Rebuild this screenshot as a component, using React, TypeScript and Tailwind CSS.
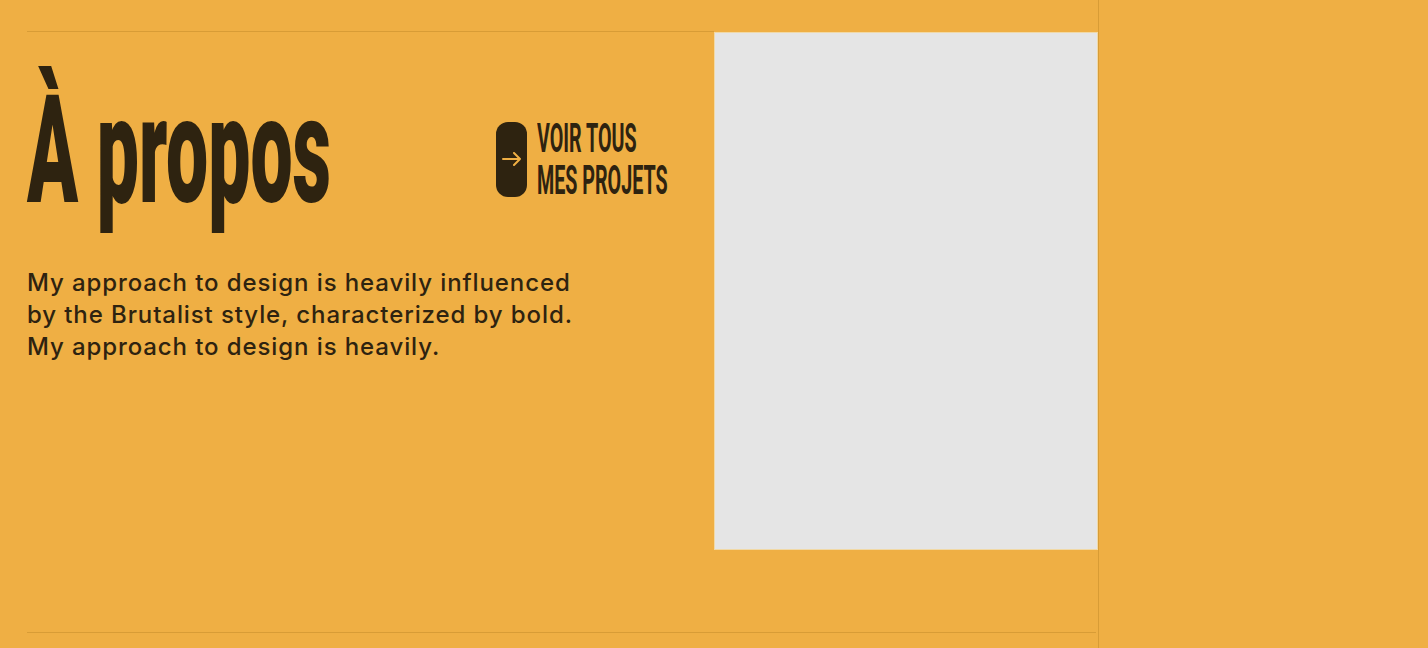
export default function App() {
  return (
    <div className="min-h-[648px] w-full bg-[#EFAF44] text-[#2E2310] flex">
      <section className="w-[1099px] border-r border-[#D89C36] pl-[27px] pt-[31px] flex flex-col">
        <div className="flex">
          {/* Colonne texte */}
          <div className="w-[687px] border-t border-[#D89C36]">
            <div className="flex items-start mt-[44px]">
              <div className="w-[469px] h-[150px]">
                <h1
                  className="inline-block origin-left scale-x-[0.5] whitespace-nowrap text-[150px] leading-[150px] font-black tracking-[0px]"
                  style={{ fontFamily: "Roboto, 'Liberation Sans', sans-serif" }}
                >
                  À propos
                </h1>
              </div>
              <a href="#" className="flex items-center gap-[10px] mt-[41px]">
                <span className="w-[31px] h-[75px] rounded-[12px] bg-[#2E2310] flex items-center justify-center">
                  <svg width="20" height="14" viewBox="0 0 20 14" fill="none" stroke="#EFAF44" strokeWidth="2" strokeLinecap="round" strokeLinejoin="round">
                    <path d="M1 7h17M12 1l6 6-6 6" />
                  </svg>
                </span>
                <span className="w-[134px] h-[84px]">
                  <span
                    className="block origin-left scale-x-[0.48] whitespace-nowrap uppercase text-[41px] leading-[42px] font-bold"
                    style={{ fontFamily: "Roboto, 'Liberation Sans', sans-serif" }}
                  >
                    Voir tous
                    <br />
                    mes projets
                  </span>
                </span>
              </a>
            </div>
            <p
              className="mt-[41px] max-w-[600px] text-[24px] leading-[32px] font-medium tracking-[0.9px]"
              style={{ fontFamily: "Inter, 'Liberation Sans', sans-serif" }}
            >
              My approach to design is heavily influenced
              <br />
              by the Brutalist style, characterized by bold.
              <br />
              My approach to design is heavily.
            </p>
          </div>
          {/* Image */}
          <div className="mt-px w-[384px] h-[518px] bg-[#E5E5E5] border border-[#F1D9A6]" />
        </div>
        <div className="mt-[82px] mr-[2px] border-t border-[#D89C36]" />
      </section>
      <div className="flex-1" />
    </div>
  );
}
